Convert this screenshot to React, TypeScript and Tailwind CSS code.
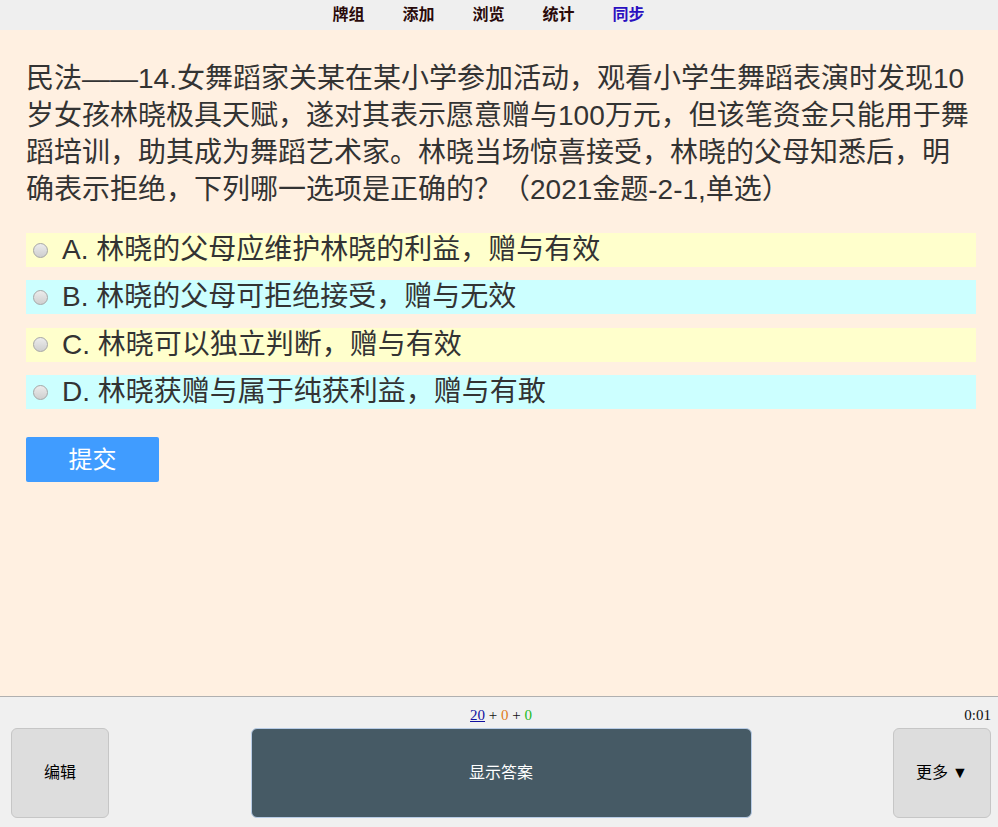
import React from "react";

const sans = { fontFamily: '"Liberation Sans", "Noto Sans CJK SC", sans-serif' };

function Radio() {
  return (
    <span className="ml-[7px] mr-[14px] inline-block h-[15px] w-[15px] shrink-0 rounded-full border border-[#a6a6a6] bg-gradient-to-b from-[#ececec] to-[#cfcfcf]" />
  );
}

const options = [
  { label: "A. 林晓的父母应维护林晓的利益，赠与有效", bg: "bg-[#ffffcc]" },
  { label: "B. 林晓的父母可拒绝接受，赠与无效", bg: "bg-[#ccffff]" },
  { label: "C. 林晓可以独立判断，赠与有效", bg: "bg-[#ffffcc]" },
  { label: "D. 林晓获赠与属于纯获利益，赠与有敢", bg: "bg-[#ccffff]" },
];

export default function App() {
  return (
    <div className="flex h-[827px] w-full flex-col overflow-hidden bg-[#fff0e1]">
      {/* top nav */}
      <div
        className="flex h-[30px] shrink-0 items-center justify-center gap-[38px] bg-[#efefef] pr-[21px] text-[16px] font-bold"
        style={{ fontFamily: '"Liberation Serif", "Noto Sans CJK SC", serif' }}
      >
        <span className="text-[#2a0a0a]">牌组</span>
        <span className="text-[#2a0a0a]">添加</span>
        <span className="text-[#2a0a0a]">浏览</span>
        <span className="text-[#2a0a0a]">统计</span>
        <span className="text-[#2a10c0]">同步</span>
      </div>

      {/* main */}
      <div className="flex-1 pl-[26px] pr-[22px] pt-[30px] text-[#333333]" style={sans}>
        <p className="text-[28px] leading-[37px]">
          民法——14.女舞蹈家关某在某小学参加活动，观看小学生舞蹈表演时发现10
          <br />
          岁女孩林晓极具天赋，遂对其表示愿意赠与100万元，但该笔资金只能用于舞
          <br />
          蹈培训，助其成为舞蹈艺术家。林晓当场惊喜接受，林晓的父母知悉后，明
          <br />
          确表示拒绝，下列哪一选项是正确的？（2021金题-2-1,单选）
        </p>

        <div className="mt-[25px] flex flex-col gap-[13.4px]">
          {options.map((o) => (
            <div key={o.label} className={`flex h-[34px] items-center ${o.bg}`}>
              <Radio />
              <span className="whitespace-nowrap text-[28px] leading-[34px] text-[#333333]">{o.label}</span>
            </div>
          ))}
        </div>

        <button className="mt-[28px] flex h-[45px] w-[133px] items-center justify-center rounded-[2px] bg-[#409cff] text-[24px] text-white">
          提交
        </button>
      </div>

      {/* bottom bar */}
      <div
        className="flex h-[131px] shrink-0 flex-col border-t border-[#b0b0b0] bg-[#f0f0f0] pl-[11px] pr-[7px]"
        style={{ fontFamily: '"Liberation Serif", "Noto Sans CJK SC", serif' }}
      >
        <div className="grid h-[31px] grid-cols-[1fr_auto_1fr] items-center pt-[6px] text-[15px]">
          <span />
          <span className="text-[#111]">
            <span className="text-[#1010a0] underline">20</span>
            <span> + </span>
            <span className="text-[#e07a20]">0</span>
            <span> + </span>
            <span className="text-[#22bb22]">0</span>
          </span>
          <span className="text-right text-[#111]">0:01</span>
        </div>
        <div className="flex h-[90px] items-stretch justify-between">
          <button className="w-[98px] rounded-[6px] border border-[#c6c6c6] bg-[#dddddd] text-[16px] text-black">
            编辑
          </button>
          <button className="w-[501px] rounded-[6px] border border-[#b8cce6] bg-[#465a65] text-[16px] text-white">
            显示答案
          </button>
          <button className="w-[98px] rounded-[6px] border border-[#c6c6c6] bg-[#dddddd] text-[16px] text-black">
            更多 ▼
          </button>
        </div>
      </div>
    </div>
  );
}
